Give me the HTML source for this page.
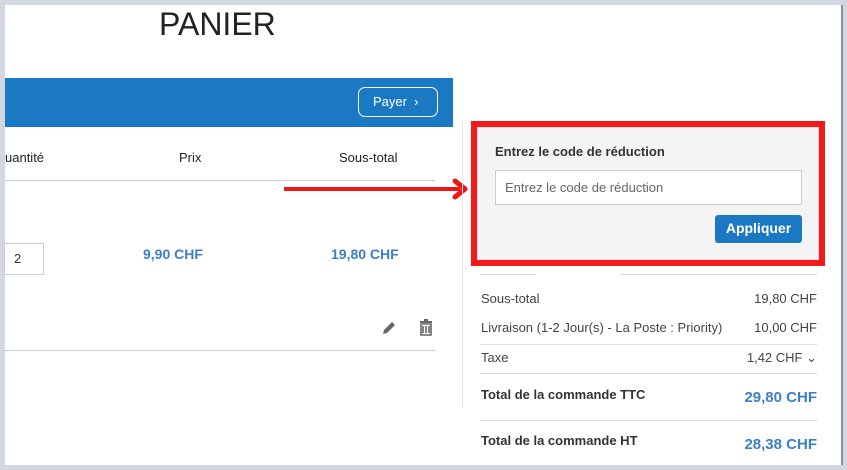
<!DOCTYPE html>
<html><head><meta charset="utf-8"><style>
*{margin:0;padding:0;box-sizing:border-box}
body{width:847px;height:470px;background:#d3d7df;position:relative;overflow:hidden;font-family:"Liberation Sans",sans-serif;color:#333}
.a{position:absolute}
.page{left:5px;top:5px;width:836px;height:460px;background:#fff}
.r{text-align:right}
.blue{color:#3b7fc8}
</style></head><body>
<div class="a page"></div>
<div class="a" style="left:841px;top:5px;width:2px;height:460px;background:#8d8f94"></div>
<div class="a" style="left:159px;top:6px;font-size:32px;color:#222">PANIER</div>
<div class="a" style="left:5px;top:78px;width:448px;height:49px;background:#1b79c3"></div>
<div class="a" style="left:358px;top:87px;width:80px;height:30px;border:1.5px solid #fff;border-radius:7px;color:#fff;font-size:13px;line-height:27px;padding-left:14px">Payer&nbsp; ›</div>
<div class="a" style="left:5px;top:150px;font-size:13px;color:#222">uantité</div>
<div class="a" style="left:179px;top:150px;font-size:13px;color:#222">Prix</div>
<div class="a" style="left:339px;top:150px;font-size:13px;color:#222">Sous-total</div>
<div class="a" style="left:5px;top:180px;width:430px;height:1px;background:#ccc"></div>
<div class="a" style="left:284px;top:187px;width:176px;height:4px;background:#f01414"></div>
<svg class="a" style="left:448px;top:177px" width="22" height="24"><path d="M7 4 L17 12 L7 20" stroke="#f01414" stroke-width="5" fill="none" stroke-linecap="round" stroke-linejoin="round"/></svg>
<div class="a" style="left:4px;top:243px;width:40px;height:32px;border:1px solid #ccc;font-size:13px;line-height:30px;padding-left:9px">2</div>
<div class="a blue" style="left:143px;top:246px;font-size:14px;font-weight:bold">9,90 CHF</div>
<div class="a blue" style="left:331px;top:246px;font-size:14px;font-weight:bold">19,80 CHF</div>
<svg class="a" style="left:381px;top:320px" width="16" height="16"><path d="M2 14 L3 10 L11 2 L14 5 L6 13 Z" fill="#666"/></svg>
<svg class="a" style="left:419px;top:319px" width="14" height="17"><rect x="1" y="2" width="12" height="2" fill="#666"/><rect x="5" y="0" width="4" height="2" fill="#666"/><path d="M2 5 H12 V16 H2Z M4 7 V14 M7 7 V14 M10 7 V14" fill="none" stroke="#666" stroke-width="1.6"/></svg>
<div class="a" style="left:5px;top:350px;width:430px;height:1px;background:#ccc"></div>
<div class="a" style="left:462px;top:120px;width:1px;height:288px;background:#e6e6e6"></div>
<div class="a" style="left:471px;top:121px;width:354px;height:145px;border:6px solid #f31a1a;background:#f4f4f4"></div>
<div class="a" style="left:477px;top:127px;width:342px;height:133px;border:1px solid #ddd"></div>
<div class="a" style="left:495px;top:144px;font-size:13px;font-weight:bold;color:#333">Entrez le code de réduction</div>
<div class="a" style="left:495px;top:170px;width:307px;height:35px;background:#fff;border:1px solid #ccc;font-size:13px;color:#666;line-height:33px;padding-left:9px">Entrez le code de réduction</div>
<div class="a" style="left:715px;top:215px;width:87px;height:28px;background:#1b79c3;border-radius:3px;color:#fff;font-size:14px;font-weight:bold;line-height:27px;text-align:center">Appliquer</div>
<div class="a" style="left:480px;top:274px;width:56px;height:1px;background:#ddd"></div>
<div class="a" style="left:620px;top:274px;width:197px;height:1px;background:#ddd"></div>
<div class="a" style="left:481px;top:291px;font-size:13px;color:#444">Sous-total</div>
<div class="a r" style="right:30px;top:291px;font-size:13px;color:#444">19,80 CHF</div>
<div class="a" style="left:481px;top:320px;font-size:13px;color:#444">Livraison (1-2 Jour(s) - La Poste : Priority)</div>
<div class="a r" style="right:30px;top:320px;font-size:13px;color:#444">10,00 CHF</div>
<div class="a" style="left:480px;top:344px;width:337px;height:1px;background:#ddd"></div>
<div class="a" style="left:481px;top:350px;font-size:13px;color:#444">Taxe</div>
<div class="a r" style="right:30px;top:350px;font-size:13px;color:#444">1,42 CHF ⌄</div>
<div class="a" style="left:480px;top:373px;width:337px;height:1px;background:#ddd"></div>
<div class="a" style="left:481px;top:387px;font-size:13px;font-weight:bold;color:#333">Total de la commande TTC</div>
<div class="a r blue" style="right:30px;top:389px;font-size:15px;font-weight:bold">29,80 CHF</div>
<div class="a" style="left:480px;top:420px;width:337px;height:1px;background:#ddd"></div>
<div class="a" style="left:481px;top:433px;font-size:13px;font-weight:bold;color:#333">Total de la commande HT</div>
<div class="a r blue" style="right:30px;top:436px;font-size:15px;font-weight:bold">28,38 CHF</div>
</body></html>
